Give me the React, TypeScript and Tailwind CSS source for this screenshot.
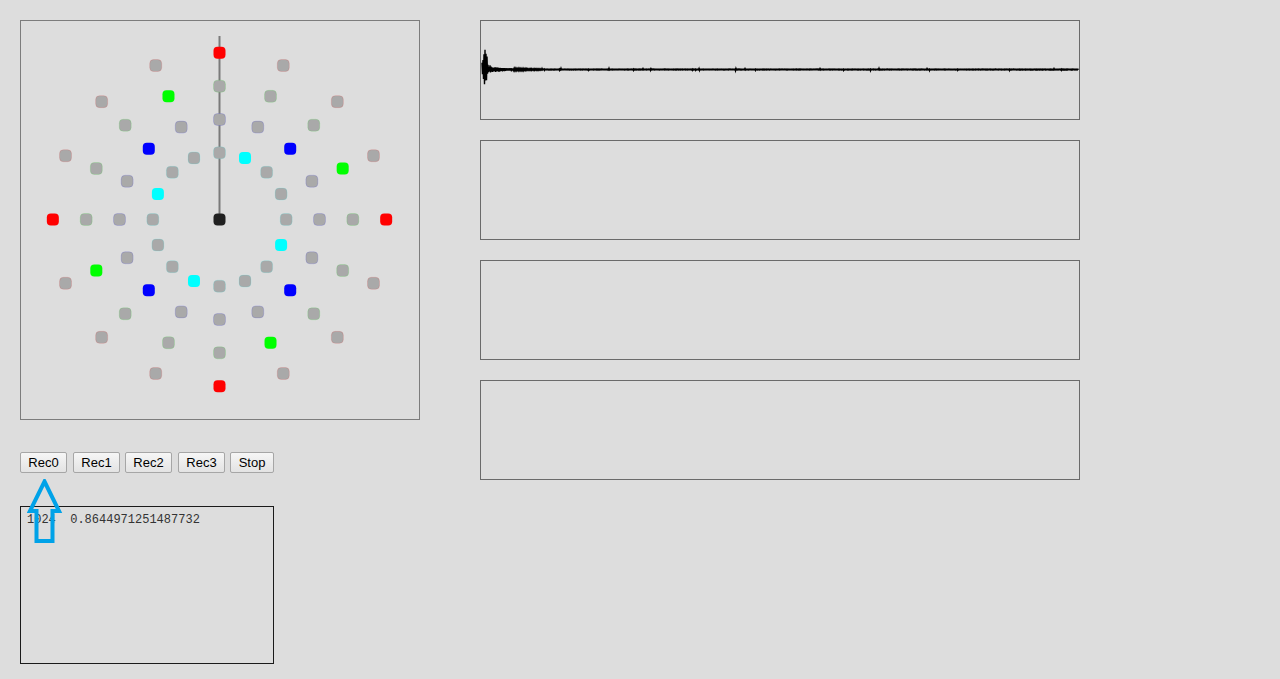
import React from "react";

// ring radii (2..5 x 33.33) and the colour of the marked spokes on each ring
const RINGS = [
  { r: 66.67, color: "#00ffff", offset: 67.5 },
  { r: 100, color: "#0000ff", offset: 45 },
  { r: 133.33, color: "#00ff00", offset: 22.5 },
  { r: 166.67, color: "#ff0000", offset: 0 },
];

const CX = 198.5;
const CY = 198.5;

function seeded(seed: number) {
  let s = seed;
  return () => {
    s = (s * 16807) % 2147483647;
    return (s - 1) / 2147483646;
  };
}

const Speakers = () => {
  const dots: React.ReactNode[] = [];
  RINGS.forEach((ring, ri) => {
    for (let i = 0; i < 16; i++) {
      const deg = i * 22.5;
      const rad = (deg * Math.PI) / 180;
      const x = CX + ring.r * Math.cos(rad);
      const y = CY - ring.r * Math.sin(rad);
      const marked = Math.abs(((deg - ring.offset) % 90 + 90) % 90) < 0.01;
      dots.push(
        <rect
          key={`${ri}-${i}`}
          x={x - 6}
          y={y - 6}
          width={12}
          height={12}
          rx={4}
          fill={marked ? ring.color : "#a9a9a9"}
          stroke={marked ? "none" : ring.color}
          strokeOpacity={0.12}
          strokeWidth={1}
        />
      );
    }
  });

  return (
    <svg width="398" height="398" viewBox="0 0 398 398" className="block">
      <line x1={CX} y1={15} x2={CX} y2={CY} stroke="#7a7a7a" strokeWidth={2} />
      {dots}
      <rect x={CX - 6} y={CY - 6} width={12} height={12} rx={4} fill="#202020" />
    </svg>
  );
};

const Waveform = () => {
  const rnd = seeded(42);
  const pts: string[] = [];
  let sign = 1;
  for (let x = 1; x < 598; x += 0.5) {
    let amp = 0.35;
    if (x < 8) amp = 20 * Math.exp(-Math.pow((x - 4) / 2.4, 2)) + 2;
    else if (x < 60) amp = 3 * Math.exp(-(x - 8) / 18) + 0.45;
    const tick = rnd() < 0.03 ? 1 : 0;
    sign = -sign;
    const skew = x < 8 && sign < 0 ? 1.15 : x < 8 ? 0.75 : 1;
    const y = 48.5 + sign * skew * (0.6 + rnd() * 0.4) * (amp + tick);
    pts.push(`${x.toFixed(1)},${y.toFixed(2)}`);
  }
  return (
    <svg width="598" height="98" viewBox="0 0 598 98" className="block">
      <polyline points={pts.join(" ")} fill="none" stroke="#000" strokeWidth={1.4} />
    </svg>
  );
};

const Btn = ({ label, className }: { label: string; className: string }) => (
  <button
    type="button"
    className={`h-[21px] rounded-[2px] border border-[#a6a6a6] bg-gradient-to-b from-[#f6f6f6] to-[#e3e3e3] text-[13px] leading-none text-black font-['Liberation_Sans',Arial,sans-serif] ${className}`}
  >
    {label}
  </button>
);

export default function App() {
  return (
    <div className="min-h-[679px] w-full bg-[#dddddd] p-5 font-['Liberation_Sans',Arial,sans-serif]">
      <div className="flex gap-[60px]">
        {/* left column */}
        <div className="flex flex-col">
          <div className="w-[400px] h-[400px] border border-[#7c7c7c]">
            <Speakers />
          </div>

          <div className="mt-[32px] flex">
            <Btn label="Rec0" className="w-[47px]" />
            <Btn label="Rec1" className="w-[47px] ml-[6px]" />
            <Btn label="Rec2" className="w-[47px] ml-[5px]" />
            <Btn label="Rec3" className="w-[47px] ml-[6px]" />
            <Btn label="Stop" className="w-[44px] ml-[5px]" />
          </div>

          <div className="relative mt-[33px] w-[254px] h-[158px] border border-[#1a1a1a]">
            <pre className="pl-[6px] pt-[6px] text-[12px] leading-[14px] text-[#333] font-['Liberation_Mono','Courier_New',monospace]">
              {"1024  0.8644971251487732"}
            </pre>
            {/* annotation arrow */}
            <svg
              className="absolute left-[6px] top-[-28px]"
              width="36"
              height="66"
              viewBox="0 0 36 66"
            >
              <path
                d="M17.5 2.5 L32 32 L25.5 32 L25.5 62 L9.5 62 L9.5 32 L3 32 Z"
                fill="none"
                stroke="#00a2e8"
                strokeWidth={4}
                strokeLinejoin="miter"
              />
            </svg>
          </div>
        </div>

        {/* right column */}
        <div className="flex flex-col gap-5">
          <div className="w-[600px] h-[100px] border border-[#6a6a6a]">
            <Waveform />
          </div>
          <div className="w-[600px] h-[100px] border border-[#6a6a6a]" />
          <div className="w-[600px] h-[100px] border border-[#6a6a6a]" />
          <div className="w-[600px] h-[100px] border border-[#6a6a6a]" />
        </div>
      </div>
    </div>
  );
}
